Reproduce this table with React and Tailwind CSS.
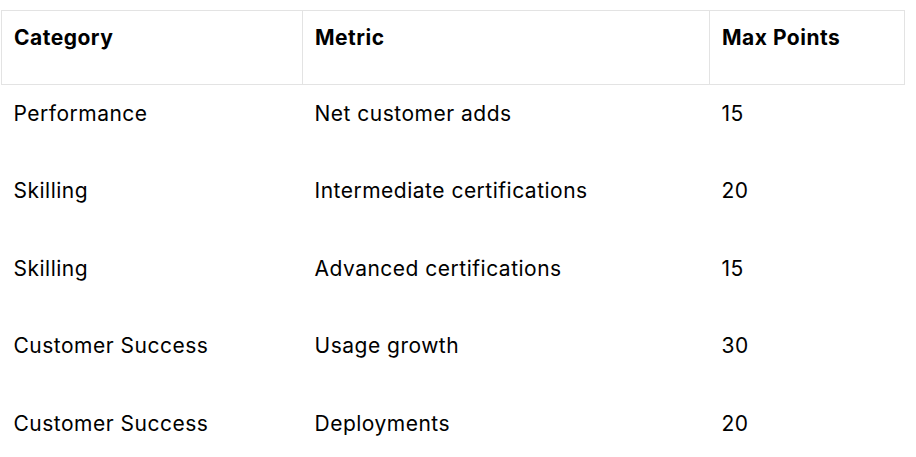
const rows = [
  ["Performance", "Net customer adds", "15"],
  ["Skilling", "Intermediate certifications", "20"],
  ["Skilling", "Advanced certifications", "15"],
  ["Customer Success", "Usage growth", "30"],
  ["Customer Success", "Deployments", "20"],
];

export default function App() {
  return (
    <div className="w-[916px] h-[457px] bg-white pt-[10px] pl-[1px] text-black font-['Inter',sans-serif] text-[21px] leading-[26px] tracking-[0.5px]">
      <table className="border-collapse table-fixed w-[903px]">
        <colgroup>
          <col className="w-[301px]" />
          <col className="w-[407px]" />
          <col className="w-[195px]" />
        </colgroup>
        <thead>
          <tr className="h-[74px]">
            {["Category", "Metric", "Max Points"].map((h) => (
              <th
                key={h}
                className="border border-[#e3e3e3] text-left align-top font-bold pl-[12px] pt-[14px]"
              >
                {h}
              </th>
            ))}
          </tr>
        </thead>
        <tbody>
          {rows.map((r, i) => (
            <tr key={i} className="h-[77.5px]">
              {r.map((c, j) => (
                <td key={j} className="align-top pl-[12px] pt-[16px]">
                  {c}
                </td>
              ))}
            </tr>
          ))}
        </tbody>
      </table>
    </div>
  );
}
